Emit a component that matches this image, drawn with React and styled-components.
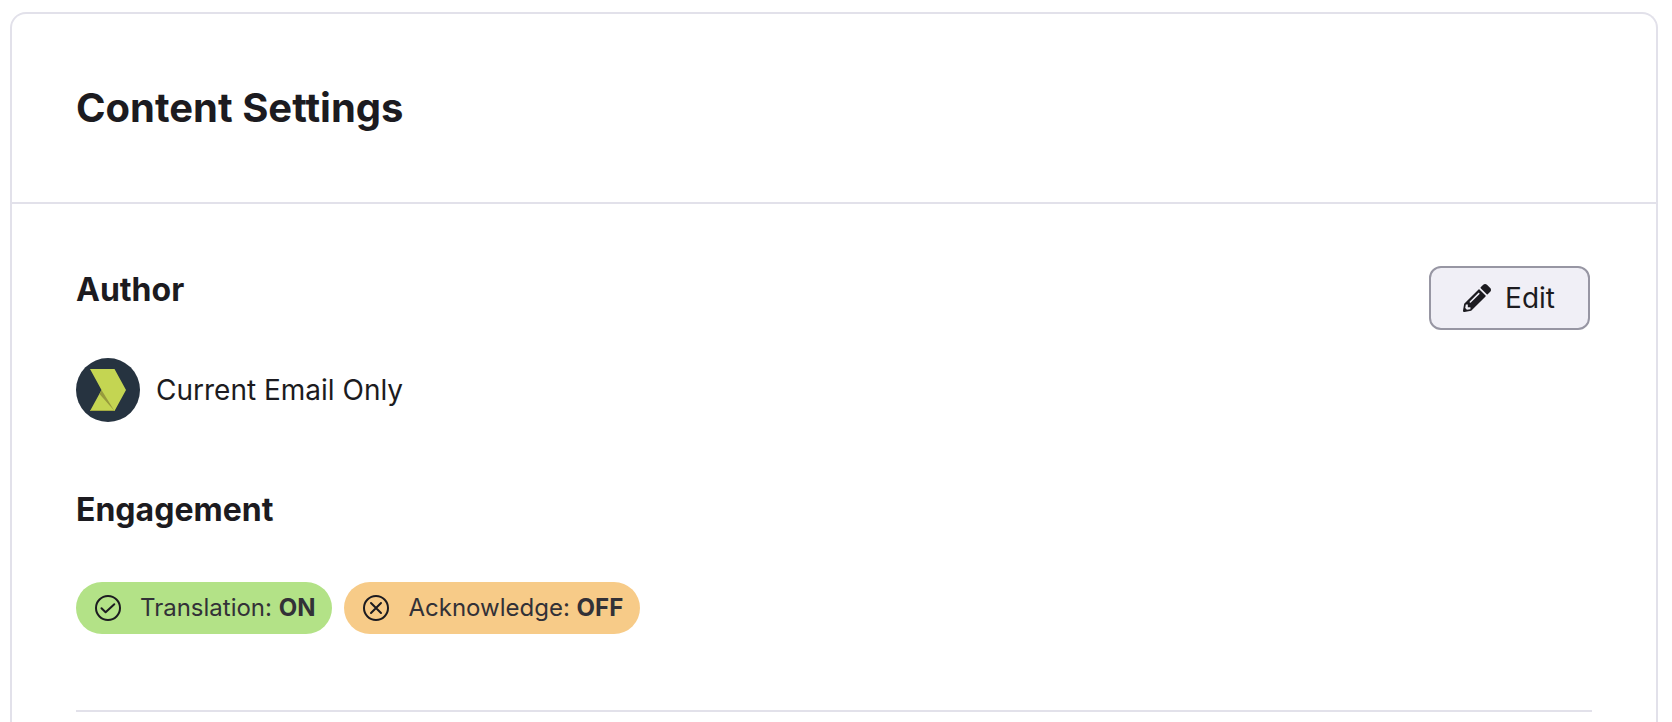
import React from 'react';
import styled, { createGlobalStyle } from 'styled-components';
import { FaPencilAlt } from 'react-icons/fa';

export default function App() {
  return (
    <Page>
      <GlobalStyle />
      <Card>
        <CardHeader>
          <Title>Content Settings</Title>
        </CardHeader>
        <CardBody>
          <Details>
            <div>
              <Heading>Author</Heading>
              <Author>
                <AuthorLogo />
                <span>Current Email Only</span>
              </Author>
              <Heading>Engagement</Heading>
              <PillList>
                <Pill $color="#b3e287">
                  <StatusIcon mark="M9.5 16.2L13.6 20.2L22.3 12.2" />
                  <span>Translation: <strong>ON</strong></span>
                </Pill>
                <Pill $color="#f7cb88">
                  <StatusIcon mark="M11 11L21 21M21 11L11 21" />
                  <span>Acknowledge: <strong>OFF</strong></span>
                </Pill>
              </PillList>
            </div>
            <EditButton type="button">
              <FaPencilAlt />
              Edit
            </EditButton>
          </Details>
          <Divider />
        </CardBody>
      </Card>
    </Page>
  );
}

function AuthorLogo() {
  return (
    <Avatar viewBox="0 0 64 64" aria-hidden="true">
      <circle cx="32" cy="32" r="32" fill="#263340" />
      <path d="M14 11H38.5L50 32L38.5 53H14L25.5 32Z" fill="#c4d552" />
      <path d="M25.5 32L38.5 53L23.5 36Z" fill="#979b3c" />
      <path d="M14.5 52.5H38.5" stroke="#a3ab42" />
    </Avatar>
  );
}

function StatusIcon({ mark }) {
  return (
    <svg viewBox="0 0 32 32" fill="none" stroke="currentColor" strokeWidth="2" strokeLinecap="round" strokeLinejoin="round" aria-hidden="true">
      <circle cx="16" cy="16" r="12" />
      <path d={mark} />
    </svg>
  );
}

const GlobalStyle = createGlobalStyle`
  * {
    box-sizing: border-box;
  }

  body {
    margin: 0;
    background: #fff;
    color: #1c1b20;
    font-family: Inter, "Liberation Sans", sans-serif;
  }
`;

const Page = styled.main`
  display: flex;
  flex-direction: column;
  min-height: 100vh;
  padding: 12px 14px 0 10px;
`;

const Card = styled.section`
  flex: 1;
  border: 2px solid #e2e1ea;
  border-bottom: 0;
  border-radius: 16px 16px 0 0;
`;

const CardHeader = styled.header`
  padding: 64px;
  border-bottom: 2px solid #e2e1ea;
`;

const Title = styled.h1`
  margin: 0;
  font-size: 40px;
  line-height: 60px;
  font-weight: 700;
`;

const CardBody = styled.div`
  padding: 62px 64px 0;
`;

const Details = styled.div`
  display: flex;
  justify-content: space-between;
  align-items: flex-start;
  padding-right: 2px;
`;

const Heading = styled.h2`
  margin: 0;
  font-size: 32px;
  line-height: 48px;
  font-weight: 700;
`;

const Author = styled.div`
  display: flex;
  align-items: center;
  gap: 16px;
  margin: 44px 0 64px;
  font-size: 28px;
  line-height: 42px;
`;

const Avatar = styled.svg`
  width: 64px;
  height: 64px;
`;

const PillList = styled.div`
  display: flex;
  flex-wrap: wrap;
  gap: 12px;
  margin-top: 48px;
`;

const Pill = styled.div`
  display: flex;
  align-items: center;
  gap: 16px;
  padding: 8px 17px 8px 16px;
  border-radius: 26px;
  background: ${({ $color }) => $color};
  color: #323137;
  font-size: 24px;
  line-height: 36px;

  svg {
    width: 32px;
    height: 32px;
    color: #1c1b20;
  }
`;

const EditButton = styled.button`
  display: flex;
  align-items: center;
  gap: 14px;
  height: 64px;
  padding: 0 33px 0 32px;
  border: 2px solid #9796a3;
  border-radius: 12px;
  background: #f0eff6;
  color: #1c1b20;
  font-family: inherit;
  font-size: 28px;
  line-height: 42px;
  cursor: pointer;

  svg {
    width: 28px;
    height: 28px;
  }
`;

const Divider = styled.hr`
  margin: 76px 0 0;
  border: 0;
  border-top: 2px solid #e2e1ea;
`;
